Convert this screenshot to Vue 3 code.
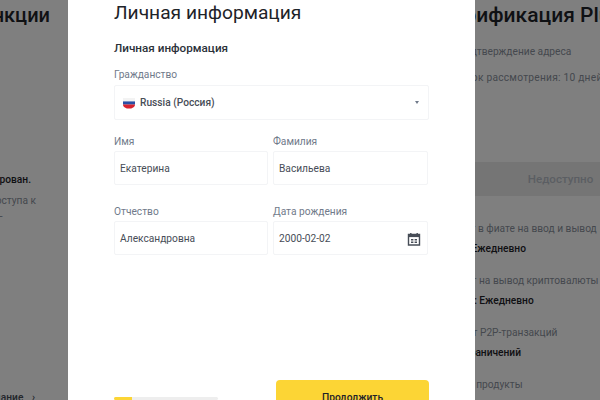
<template>
  <div class="page">
    <!-- Page behind the dialog -->
    <div class="bg">
      <section class="col-left">
        <h2 class="bg-title">Лимиты и функции</h2>
        <p class="strong-line">Аккаунт не верифицирован.</p>
        <p class="soft-line">Нет доступа к</p>
        <p class="soft-line dash">—</p>
        <a class="more">Начать задание <span class="chev">›</span></a>
      </section>
      <section class="col-right">
        <h2 class="bg-title">Верификация Plus</h2>
        <p class="soft-line line-a">Подтверждение адреса</p>
        <p class="soft-line line-b">Срок рассмотрения: 10 дней</p>
        <div class="band"><span>Недоступно</span></div>
        <div v-for="limit in limits" :key="limit.label" class="limit">
          <div class="soft-line" :style="{ marginLeft: limit.labelShift + 'px' }">{{ limit.label }}</div>
          <div v-if="limit.value" class="strong-line" :style="{ marginLeft: limit.valueShift + 'px' }">{{ limit.value }}</div>
        </div>
      </section>
    </div>

    <div class="overlay">
      <div class="modal">
        <h1 class="modal-title">Личная информация</h1>
        <h3 class="section-title">Личная информация</h3>

        <div class="field">
          <label>Гражданство</label>
          <div class="box select-box">
            <svg class="flag" viewBox="0 0 12 12" width="12" height="12">
              <path d="M0 1h12v3.6H0z" fill="#f3f3f3" />
              <path d="M0 4.4h12v3.2H0z" fill="#2a4fa5" />
              <path d="M0 7.4h12C12 10 9 11.6 6 11.6S0 10 0 7.4z" fill="#d8232f" />
            </svg>
            <span class="country">Russia (Россия)</span>
            <span class="caret"></span>
          </div>
        </div>

        <div class="form-grid">
          <div v-for="item in fields" :key="item.label" class="field">
            <label>{{ item.label }}</label>
            <div class="box">
              <span>{{ item.value }}</span>
              <svg v-if="item.date" class="calendar" viewBox="0 0 14 14" width="14" height="14">
                <path d="M1.5 2.5h11v10.5h-11z" fill="none" stroke="#474d57" stroke-width="1.4" />
                <path d="M1.5 2.5h11v2.6h-11z" fill="#474d57" />
                <path d="M3.8 1v2.4M10.2 1v2.4" stroke="#474d57" stroke-width="1.4" />
                <path d="M4 7h2.4v1.4H4zM7.6 7H10v1.4H7.6zM4 9.6h2.4V11H4zM7.6 9.6H10V11H7.6z" fill="#474d57" />
              </svg>
            </div>
          </div>
        </div>

        <div class="footer">
          <div class="progress"><div class="progress-fill" :style="{ width: progress + '%' }"></div></div>
          <button class="next">Продолжить</button>
        </div>
      </div>
    </div>
  </div>
</template>

<script setup>
const progress = 17

const fields = [
  { label: 'Имя', value: 'Екатерина' },
  { label: 'Фамилия', value: 'Васильева' },
  { label: 'Отчество', value: 'Александровна' },
  { label: 'Дата рождения', value: '2000-02-02', date: true },
]

const limits = [
  { label: 'Лимит в фиате на ввод и вывод', value: '50K USD Ежедневно', labelShift: 14, valueShift: -1 },
  { label: 'Лимит на вывод криптовалюты', value: '8M BUSD: Ежедневно', labelShift: 15, valueShift: 1 },
  { label: 'Лимит P2P-транзакций', value: 'Без ограничений', labelShift: 16, valueShift: 10 },
  { label: 'Другие продукты', value: '', labelShift: 10, valueShift: 0 },
]
</script>

<style>
html,
body {
  margin: 0;
  background: #fff;
}
</style>

<style scoped>
.page {
  position: relative;
  width: 600px;
  height: 400px;
  overflow: hidden;
  font-family: Roboto, "Noto Sans", sans-serif;
  color: #1e2329;
}

.bg {
  display: flex;
  justify-content: space-between;
  height: 100%;
  background: #fff;
}

.col-left {
  width: 50px;
  padding-top: 1px;
  display: flex;
  flex-direction: column;
  align-items: flex-end;
}

.col-right {
  width: 170px;
  padding-top: 1px;
  display: flex;
  flex-direction: column;
  align-items: flex-start;
}

.bg-title {
  margin: 0;
  font-size: 20px;
  line-height: 28px;
  font-weight: 500;
  white-space: nowrap;
}

.col-right .bg-title {
  margin-left: 10px;
  font-size: 21px;
}

.soft-line,
.strong-line {
  margin: 0;
  font-size: 10.2px;
  line-height: 16px;
  white-space: nowrap;
}

.soft-line {
  color: #8a919c;
}

.strong-line {
  font-weight: 500;
}

.col-left .strong-line {
  margin-top: 143px;
  margin-right: 19px;
}

.col-left .soft-line {
  margin-top: 5px;
  margin-right: 14px;
}

.col-left .dash {
  margin-top: 0;
  margin-right: 47px;
}

.more {
  margin-top: auto;
  margin-right: 15px;
  margin-bottom: -6px;
  font-size: 10.2px;
  line-height: 16px;
  font-weight: 500;
  white-space: nowrap;
  color: #474d57;
}

.chev {
  margin-left: 6px;
}

.line-a {
  margin-top: 15px;
  margin-left: 28px;
}

.line-b {
  margin-top: 10px;
  margin-left: 29px;
  letter-spacing: 0.25px;
}

.band {
  align-self: stretch;
  flex-shrink: 0;
  box-sizing: border-box;
  margin-top: 76px;
  margin-bottom: 25px;
  height: 34px;
  background: #ebebeb;
  display: flex;
  align-items: center;
  justify-content: center;
  padding-left: 91px;
  font-size: 11.6px;
  font-weight: 500;
  color: #b7bdc6;
}

.limit {
  flex-shrink: 0;
  margin-bottom: 16px;
  display: flex;
  flex-direction: column;
  gap: 4px;
}

.overlay {
  position: absolute;
  inset: 0;
  background: rgba(0, 0, 0, 0.5);
}

.modal {
  width: 407px;
  height: 400px;
  box-sizing: border-box;
  margin-left: 68px;
  padding: 0 46px;
  background: #fff;
  display: flex;
  flex-direction: column;
}

.modal-title {
  margin: 0;
  font-size: 19.2px;
  line-height: 26px;
  font-weight: 400;
  white-space: nowrap;
}

.section-title {
  margin: 14px 0 0;
  font-size: 11.7px;
  line-height: 16px;
  font-weight: 500;
  color: #2b3139;
}

.field {
  display: flex;
  flex-direction: column;
}

.section-title + .field {
  margin-top: 12px;
}

label {
  font-size: 10.2px;
  line-height: 14px;
  color: #707a8a;
  margin-bottom: 3px;
}

.box {
  height: 35px;
  box-sizing: border-box;
  border: 1px solid #f3f4f6;
  border-radius: 2px;
  padding: 0 6px 0 5px;
  display: flex;
  align-items: center;
  justify-content: space-between;
  font-size: 10.2px;
  color: #474d57;
}

.select-box {
  padding: 0 9px 0 8px;
  justify-content: flex-start;
}

.flag {
  margin-right: 5px;
}

.country {
  font-weight: 500;
}

.caret {
  margin-left: auto;
  width: 0;
  height: 0;
  border-left: 2.5px solid transparent;
  border-right: 2.5px solid transparent;
  border-top: 3.5px solid #707a8a;
}

.form-grid {
  display: grid;
  grid-template-columns: 154px 155px;
  column-gap: 5px;
  row-gap: 20px;
  margin-top: 15px;
}

.form-grid label {
  margin-bottom: 2px;
}

.form-grid .box {
  height: 34px;
  padding-top: 1px;
}

.footer {
  margin-top: auto;
  display: flex;
  justify-content: space-between;
  align-items: flex-end;
  height: 20px;
}

.progress {
  width: 104px;
  height: 3px;
  background: #eeeeee;
  border-radius: 2px;
  overflow: hidden;
}

.progress-fill {
  height: 100%;
  background: #fcd535;
}

.next {
  width: 153px;
  height: 34px;
  flex-shrink: 0;
  margin-bottom: -14px;
  padding-top: 2px;
  border: 0;
  border-radius: 4px;
  background: #fcd535;
  color: #1e2329;
  font-family: inherit;
  font-size: 10.2px;
  font-weight: 500;
}
</style>
